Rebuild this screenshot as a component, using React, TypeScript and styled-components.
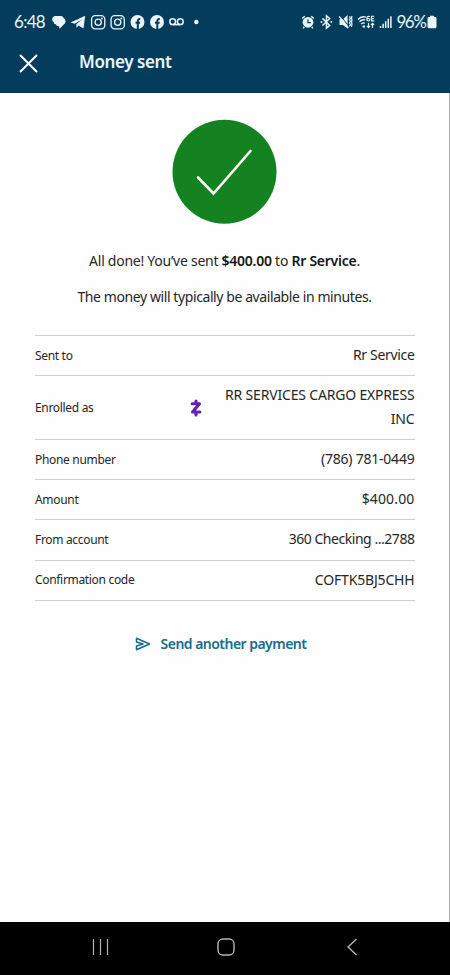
import React from 'react';
import styled, { createGlobalStyle } from 'styled-components';

const Global = createGlobalStyle`
  *, *::before, *::after { box-sizing: border-box; }
  body { margin: 0; background: #fff; }
`;

const Screen = styled.div`
  width: 450px;
  height: 975px;
  display: flex;
  flex-direction: column;
  font-family: 'Noto Sans', 'Open Sans', sans-serif;
  color: #262626;
  background: #fefefe;
  overflow: hidden;
`;

const Header = styled.header`
  height: 93px;
  flex: none;
  background: #033d5b;
  color: #eaf5fa;
`;

const StatusBar = styled.div`
  height: 43px;
  display: flex;
  justify-content: space-between;
  padding: 0 13px 0 14px;
`;

const StatusSide = styled.div`
  display: flex;
  align-items: center;
`;

const StatusText = styled.span<{ $width: number; $spacing: number }>`
  width: ${p => p.$width}px;
  font: 400 17px/22px Lato, sans-serif;
  letter-spacing: ${p => p.$spacing}px;
  white-space: nowrap;
`;

const Glyphs = styled.svg`
  display: block;
  flex: none;
`;

const TitleBar = styled.div`
  height: 40px;
  display: flex;
  align-items: center;
  padding-left: 19px;
  gap: 41px;
`;

const CloseButton = styled.button`
  display: block;
  width: 19px;
  height: 19px;
  padding: 0;
  border: 0;
  background: none;
  color: #fff;
`;

const Title = styled.h1`
  margin: -2px 0 0;
  font-size: 17px;
  line-height: 24px;
  font-weight: 600;
  letter-spacing: -0.4px;
`;

const Content = styled.main`
  flex: 1;
  display: flex;
  flex-direction: column;
  align-items: center;
  padding-top: 26px;
  border-right: 1px solid #a9a9a9;
`;

const Message = styled.p<{ $top: number; $spacing: number }>`
  margin: ${p => p.$top}px 0 0;
  font-size: 14px;
  line-height: 24px;
  letter-spacing: ${p => p.$spacing}px;
  white-space: nowrap;

  b { font-weight: 600; color: #161616; }
`;

const Details = styled.dl`
  width: 380px;
  margin: 26px 0 0;
  border-top: 1px solid #cfcfcf;
`;

const Row = styled.div<{ $height?: number }>`
  height: ${p => p.$height ?? 40.3}px;
  display: flex;
  align-items: center;
  justify-content: space-between;
  border-bottom: 1px solid #cfcfcf;
`;

const Label = styled.dt`
  width: 155px;
  padding-left: 0.5px;
  font-size: 12px;
  line-height: 20px;
  letter-spacing: -0.32px;
`;

const Value = styled.dd<{ $spacing: number }>`
  flex: 1;
  margin: 0;
  padding-bottom: 2px;
  font-size: 14px;
  line-height: 23.5px;
  text-align: right;
  letter-spacing: ${p => p.$spacing}px;
`;

const SendLink = styled.a`
  display: flex;
  align-items: center;
  gap: 10px;
  margin: 31px 8px 0 0;
  color: #176d8d;
  font-size: 14px;
  line-height: 24px;
  font-weight: 600;
  letter-spacing: -0.53px;
  white-space: nowrap;
`;

const NavBar = styled.nav`
  height: 53px;
  flex: none;
  display: flex;
  align-items: center;
  justify-content: space-between;
  padding: 0 89px 3px 91px;
  background: #000;
`;

const Instagram = ({ x }: { x: number }) => (
  <g transform={`translate(${x} 0)`} fill="none" stroke="currentColor" strokeWidth="1.3">
    <rect x="0.6" y="2.6" width="13.200" height="13.200" rx="3.6" />
    <circle cx="7.200" cy="9.200" r="3.1" />
    <circle cx="10.9" cy="5.5" r="0.4" />
  </g>
);

const Facebook = ({ x }: { x: number }) => (
  <g transform={`translate(${x} 0)`}>
    <circle cx="7" cy="9" r="7" fill="currentColor" />
    <path d="M7.3 16V8.2c0-1.6.8-2.3 2.5-2.1M5 9.7h4.6" fill="none" stroke="#033d5b" strokeWidth="2" />
  </g>
);

const NotificationIcons = () => (
  <Glyphs width="148" height="18" viewBox="0 0 148 18">
    <path fill="currentColor" d="M3.400 3h5.400c1.600 0 2.700 1 3 2.300 1.700.7 2 2.500 1.500 4.200-.3 1.100-1 1.800-1.800 2.200L8.200 15.200c-.5.4-1 .1-1-.5v-1.400H6.500c-1.400 0-2.200-.8-2.600-2L2 10.800V9.400C.5 8.800 0 7.600.2 6 .5 4.200 1.700 3 3.400 3Z" />
    <path fill="currentColor" d="M18.500 9.600 33.200 2.800 31.500 15.500l-5-3-1.900 2.300-.4-3.600 6-5-7.500 4.600Z" />
    <Instagram x={39} />
    <Instagram x={58.5} />
    <Facebook x={78.5} />
    <Facebook x={98} />
    <g fill="none" stroke="currentColor" strokeWidth="1.5">
      <circle cx="120.7" cy="8.7" r="2.9" />
      <circle cx="128.3" cy="8.7" r="2.9" />
      <path d="M120.7 11.6h7.6" />
    </g>
    <circle cx="144.3" cy="9" r="2.200" fill="currentColor" />
  </Glyphs>
);

const SystemIcons = () => (
  <Glyphs width="96" height="18" viewBox="0 0 96 18">
    <circle cx="7" cy="9.3" r="5.4" fill="currentColor" />
    <path d="m1.200 5.500 2.600-2.200M12.800 5.500l-2.600-2.200M3.300 14l-1.200 1.300M10.700 14l1.200 1.300" stroke="currentColor" strokeWidth="1.5" />
    <path d="M7 6.200v3.500h2.800" fill="none" stroke="#033d5b" strokeWidth="1.2" />
    <path d="m21.500 5.400 7.200 7-3.200 2.700V2.800l3.200 2.700-7.200 7" fill="none" stroke="currentColor" strokeWidth="1.5" />
    <circle cx="20.5" cy="9" r="1" fill="currentColor" />
    <circle cx="30.3" cy="9" r="1" fill="currentColor" />
    <path d="M38.500 6.300h3.500l4.600-4.200V15.500l-4.600-3.600h-3.500Z" fill="currentColor" />
    <path d="m39.300 2.500 9 11.500" stroke="#033d5b" strokeWidth="1" />
    <path d="m38.200 3.300 9.200 11.700" stroke="currentColor" strokeWidth="1.3" />
    <path d="M48.500 3.200l1 1.700-1 1.700 1 1.700-1 1.700 1 1.700-1 1.700M51 3l-.5 2 .5 2-.5 2 .5 2-.5 3" fill="none" stroke="currentColor" strokeWidth="1.2" />
    <g fill="none" stroke="currentColor" strokeWidth="1.3">
      <path d="M57 6.500c2-2.300 5-3.200 7.800-2.400M58.500 8.800c1.500-1.700 3.700-2.400 5.800-1.800M60.200 11c1.200-1.100 2.600-1.400 3.700-.8" />
      <path d="M69 3.500c-2.600-.6-3.300.5-3.300 2.300 0 2.700 3.300 2.700 3.300.8 0-1.500-2.300-1.500-3.100-.2M73.300 3.300h-2.700v4.600h2.700M70.600 5.500h2.300" strokeWidth="1.1" />
      <path d="M67.500 10v4.500M65.900 12.900l1.600 1.700 1.600-1.700M71.500 15v-4.500M69.900 12l1.600-1.700 1.600 1.700" strokeWidth="1.1" />
    </g>
    <circle cx="62.8" cy="13.5" r="1.3" fill="currentColor" />
    <path d="M79.500 15v-2M82.100 15v-4.300M84.700 15V8.300M87.300 15V5.700M89.900 15V3.300" stroke="currentColor" strokeWidth="1.5" />
  </Glyphs>
);

const Battery = () => (
  <Glyphs width="10" height="14" viewBox="0 0 10 14">
    <path fill="currentColor" d="M3 .7h4V2h1c1 0 1.500.600 1.500 1.500v8c0 1.100-.7 1.800-1.800 1.800H2.300C1.200 13.300.5 12.600.5 11.500v-8C.5 2.600 1 2 2 2h1Z" />
  </Glyphs>
);

const ZelleMark = styled.svg`
  display: block;
  flex: none;
  width: 12px;
  height: 18px;
  margin-top: 1px;
`;

const rows = [
  { label: 'Sent to', value: 'Rr Service', spacing: -0.33 },
  { label: 'Enrolled as', value: 'RR SERVICES CARGO EXPRESS INC', spacing: -0.18, height: 63.6, zelle: true },
  { label: 'Phone number', value: '(786) 781-0449', spacing: -0.22 },
  { label: 'Amount', value: '$400.00', spacing: 0.15 },
  { label: 'From account', value: '360 Checking ...2788', spacing: -0.46 },
  { label: 'Confirmation code', value: 'COFTK5BJ5CHH', spacing: -0.17 },
];

export default function App() {
  return (
    <Screen>
      <Global />
      <Header>
        <StatusBar>
          <StatusSide>
            <StatusText $width={37.5} $spacing={-0.7}>6:48</StatusText>
            <NotificationIcons />
          </StatusSide>
          <StatusSide>
            <SystemIcons />
            <StatusText $width={30.5} $spacing={-1.5}>96%</StatusText>
            <Battery />
          </StatusSide>
        </StatusBar>
        <TitleBar>
          <CloseButton aria-label="Close">
            <Glyphs width="19" height="19" viewBox="0 0 19 19">
              <path d="m1.500 1.500 16 16M17.500 1.500l-16 16" stroke="currentColor" strokeWidth="2" strokeLinecap="round" />
            </Glyphs>
          </CloseButton>
          <Title>Money sent</Title>
        </TitleBar>
      </Header>
      <Content>
        <Glyphs width="105" height="105" viewBox="0 0 105 105">
          <circle cx="52.5" cy="52.8" r="52" fill="#148220" />
          <path d="M26 58.500 41.500 74.500 78.500 32" fill="none" stroke="#fff" strokeWidth="2.6" strokeLinecap="round" />
        </Glyphs>
        <Message $top={25} $spacing={-0.26}>
          All done! You’ve sent <b>$400.00</b> to <b>Rr Service</b>.
        </Message>
        <Message $top={12} $spacing={-0.41}>The money will typically be available in minutes.</Message>
        <Details>
          {rows.map(r => (
            <Row key={r.label} $height={r.height}>
              <Label>{r.label}</Label>
              {r.zelle && (
                <ZelleMark viewBox="0 0 12 18">
                  <path d="M2.200 4.800h7.300L2.500 13h7.300M6 2v2.500M6 13.500v2.500" fill="none" stroke="#6320b8" strokeWidth="3.1" strokeLinejoin="round" strokeLinecap="round" />
                </ZelleMark>
              )}
              <Value $spacing={r.spacing}>{r.value}</Value>
            </Row>
          ))}
        </Details>
        <SendLink>
          <Glyphs width="16" height="14" viewBox="0 0 16 14">
            <path d="M1.500 1.200 14.500 7l-13 5.800V9L8 7 1.500 5Z" fill="none" stroke="currentColor" strokeWidth="1.5" strokeLinejoin="round" />
          </Glyphs>
          Send another payment
        </SendLink>
      </Content>
      <NavBar>
        <Glyphs width="18" height="18" viewBox="0 0 18 18">
          <path d="M2.500 1v16M9.500 1v16M16.500 1v16" stroke="#b4b4b4" strokeWidth="1.2" />
        </Glyphs>
        <Glyphs width="18" height="18" viewBox="0 0 18 18">
          <rect x="1" y="1" width="16" height="16" rx="4.8" fill="none" stroke="#b4b4b4" strokeWidth="1.4" />
        </Glyphs>
        <Glyphs width="18" height="18" viewBox="0 0 18 18">
          <path d="M13.500 1 5 9l8.500 8" fill="none" stroke="#b4b4b4" strokeWidth="1.4" />
        </Glyphs>
      </NavBar>
    </Screen>
  );
}
